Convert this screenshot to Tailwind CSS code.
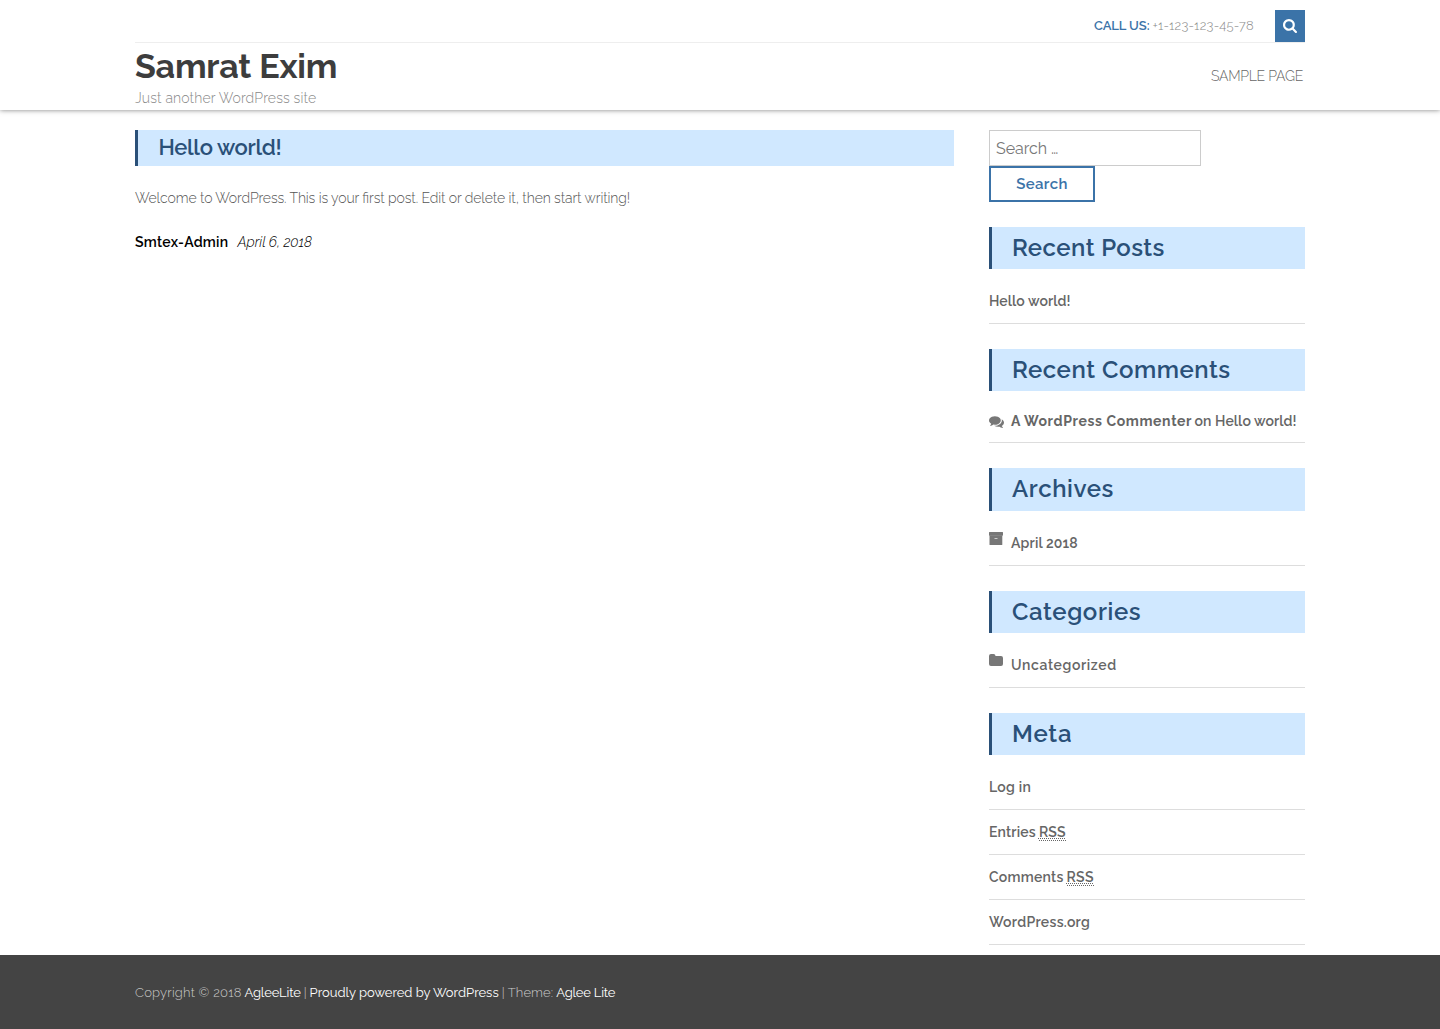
<!DOCTYPE html>
<html lang="en">
<head>
<meta charset="utf-8">
<title>Samrat Exim</title>
<script src="https://cdn.jsdelivr.net/npm/@tailwindcss/browser@4"></script>
</head>
<body class="min-h-screen bg-white font-[Raleway,Lato,sans-serif] text-sm text-[#666]">
<header class="h-[110px] bg-white shadow-[0_0_5px_rgba(0,0,0,0.5)]">
  <div class="mx-auto w-[1170px] pt-2.5">
    <div class="flex h-[33px] justify-end border-b border-[#eee] text-[13px] leading-[31px]">
      <p class="mr-[21px] flex gap-[3px] font-light text-[#888]"><span class="font-semibold tracking-[-0.08px] text-[#3b73a8]">CALL US:</span><span class="tracking-[0.25px]">+1-123-123-45-78</span></p>
      <button class="flex h-8 w-[30px] items-center justify-center bg-[#3b73a8]" aria-label="Search">
        <svg class="size-[14px] fill-white" viewBox="0 0 1664 1664"><path d="M1152 704q0-185-131.500-316.500T704 256 387.500 387.500 256 704t131.500 316.500T704 1152t316.500-131.500T1152 704zm512 832q0 52-38 90t-90 38q-54 0-90-38l-343-342q-179 124-399 124-143 0-273.500-55.500t-225-150-150-225T0 704t55.500-273.500 150-225 225-150T704 0t273.500 55.500 225 150 150 225T1408 704q0 220-124 399l343 343q37 37 37 90z"/></svg>
      </button>
    </div>
    <div class="flex justify-between">
      <div>
        <h1 class="h-[45px] text-[34px] leading-[47px] font-bold tracking-[-0.2px] text-[#3d3d3d]">Samrat Exim</h1>
        <p class="leading-5 font-light tracking-[0.15px] text-[#888]">Just another WordPress site</p>
      </div>
      <nav class="mr-0.5 pt-[23px] leading-5 font-light tracking-[-0.25px] text-[#666]">SAMPLE PAGE</nav>
    </div>
  </div>
</header>
<div class="mx-auto flex h-[845px] w-[1170px] justify-between pt-5">
  <main class="w-[819px]">
    <h2 class="h-9 border-l-[3px] border-[#2a5078] bg-[#d0e8ff] pl-[20.5px] text-[22px] leading-[34px] font-semibold tracking-[-0.33px] text-[#2a5078]">Hello world!</h2>
    <p class="mt-[22px] leading-5 font-light tracking-[-0.12px] text-[#555] [font-feature-settings:'liga']">Welcome to WordPress. This is your first post. Edit or delete it, then start writing!</p>
    <p class="mt-6 flex gap-[9px] leading-5 text-black"><b class="font-semibold tracking-[0.27px]">Smtex-Admin</b><i class="font-light">April 6, 2018</i></p>
  </main>
  <aside class="w-[316px] font-semibold text-[#666]">
    <div class="flex h-9 w-[212px] items-center border border-[#ccc] pt-px pl-1.5 text-base font-normal tracking-[-0.05px] text-[#777]">Search …</div>
    <button class="block h-9 w-[106px] border-2 border-[#3b73a8] text-[15px] leading-8 tracking-[0.35px] text-[#3b73a8]">Search</button>
    <h3 class="mt-[25px] h-[42px] border-l-[3px] border-[#2a5078] bg-[#d0e8ff] pl-5 text-2xl leading-[41px] tracking-[0.42px] text-[#2a5078]">Recent Posts</h3>
    <p class="h-[55px] border-b border-[#ddd] pt-[22px] leading-5 tracking-[0.08px]">Hello world!</p>
    <h3 class="mt-[25px] h-[42px] border-l-[3px] border-[#2a5078] bg-[#d0e8ff] pl-5 text-2xl leading-[41px] tracking-[0.53px] text-[#2a5078]">Recent Comments</h3>
    <p class="flex h-[52px] border-b border-[#ddd] pt-5 leading-5">
      <svg class="mt-[2.500px] mr-[7px] size-[15px] fill-[#777]" viewBox="0 0 1792 1792"><path d="M1408 768q0 139-94 257t-256.500 186.500T704 1280q-86 0-176-16-124 88-278 128-36 9-86 16h-3q-11 0-20.500-8t-11.500-21q-1-3-1-6.500t.5-6.500 2-6l2.500-5 3.500-5.500 4-5 4.500-5 4-4.500q5-6 23-25t26-29.500 22.500-29 25-38.500 20.500-44q-124-72-195-177T0 768q0-139 94-257t256.500-186.500T704 256t353.500 68.500T1314 511t94 257zm384 256q0 120-71 224.500T1526 1425q10 24 20.500 44t25 38.500 22.500 29 26 29.500 23 25q1 1 4 4.500t4.500 5 4 5 3.500 5.500l2.500 5 2 6 .5 6.500-1 6.500q-3 14-13 22t-22 7q-50-7-86-16-154-40-278-128-90 16-176 16-271 0-472-132 58 4 88 4 161 0 309-45t264-129q125-92 192-212t67-254q0-77-23-152 129 71 204 178t75 230z"/></svg>
      <span class="font-bold tracking-[0.62px]">A WordPress Commenter</span><span class="ml-[2.500px] tracking-[0.07px]">on Hello world!</span></p>
    <h3 class="mt-[25px] h-[43px] border-l-[3px] border-[#2a5078] bg-[#d0e8ff] pl-5 text-2xl leading-[41px] tracking-[0.6px] text-[#2a5078]">Archives</h3>
    <p class="flex h-[55px] border-b border-[#ddd] pt-[22px] leading-5">
      <svg class="-mt-px mr-2 h-[13px] w-[14px] fill-[#777]" viewBox="0 0 14 13"><path d="M0 .5Q0 0 .5 0H13.500Q14 0 14 .5V3.500H0Z M.5 3.500H13.300V12.500Q13.300 13 12.800 13H1Q.5 13 .5 12.500Z"/><path fill="#999" d="M.5 3.300H13.300V3.700H.5Z"/><path fill="#ccc" d="M5.500 6H8.500V7H5.500Z"/></svg>
      <span class="tracking-[0.15px]">April 2018</span></p>
    <h3 class="mt-[25px] h-[42px] border-l-[3px] border-[#2a5078] bg-[#d0e8ff] pl-5 text-2xl leading-[41px] tracking-[0.6px] text-[#2a5078]">Categories</h3>
    <p class="flex h-[55px] border-b border-[#ddd] pt-[22px] leading-5">
      <svg class="-mt-px mr-2 h-3 w-[14px] fill-[#777]" viewBox="0 0 14 12"><path d="M0 2Q0 0 2 0H4.500Q6.500 0 6.500 2H12Q14 2 14 4V10Q14 12 12 12H2Q0 12 0 10Z"/></svg>
      <span class="tracking-[0.62px]">Uncategorized</span></p>
    <h3 class="mt-[25px] h-[42px] border-l-[3px] border-[#2a5078] bg-[#d0e8ff] pl-5 text-2xl leading-[41px] tracking-[0.75px] text-[#2a5078]">Meta</h3>
    <ul>
      <li class="h-[55px] border-b border-[#ddd] pt-[22px] leading-5 tracking-[0.25px]">Log in</li>
      <li class="flex h-[45px] gap-[3px] border-b border-[#ddd] pt-3 leading-5 tracking-[0.18px]">Entries<abbr class="h-[19px] border-b border-dotted border-[#666] underline decoration-dotted decoration-1 underline-offset-1 [text-decoration-skip-ink:none]">RSS</abbr></li>
      <li class="flex h-[45px] gap-[3px] border-b border-[#ddd] pt-3 leading-5 tracking-[0.25px]">Comments<abbr class="h-[19px] border-b border-dotted border-[#666] underline decoration-dotted decoration-1 underline-offset-1 [text-decoration-skip-ink:none]">RSS</abbr></li>
      <li class="h-[45px] border-b border-[#ddd] pt-3 leading-5 tracking-[0.3px]">WordPress.org</li>
    </ul>
  </aside>
</div>
<footer class="h-[74px] bg-[#444] pt-7 text-[13px] leading-5 font-light text-[#ccc]">
  <p class="mx-auto flex w-[1170px] gap-[3px]"><span class="tracking-[0.22px]">Copyright © 2018</span><a class="font-normal tracking-[-0.17px] text-white">AgleeLite</a><span>|</span><a class="font-normal text-white">Proudly powered by WordPress</a><span class="tracking-[0.12px]">| Theme:</span><a class="font-normal tracking-[-0.2px] text-white">Aglee Lite</a></p>
</footer>
</body>
</html>
